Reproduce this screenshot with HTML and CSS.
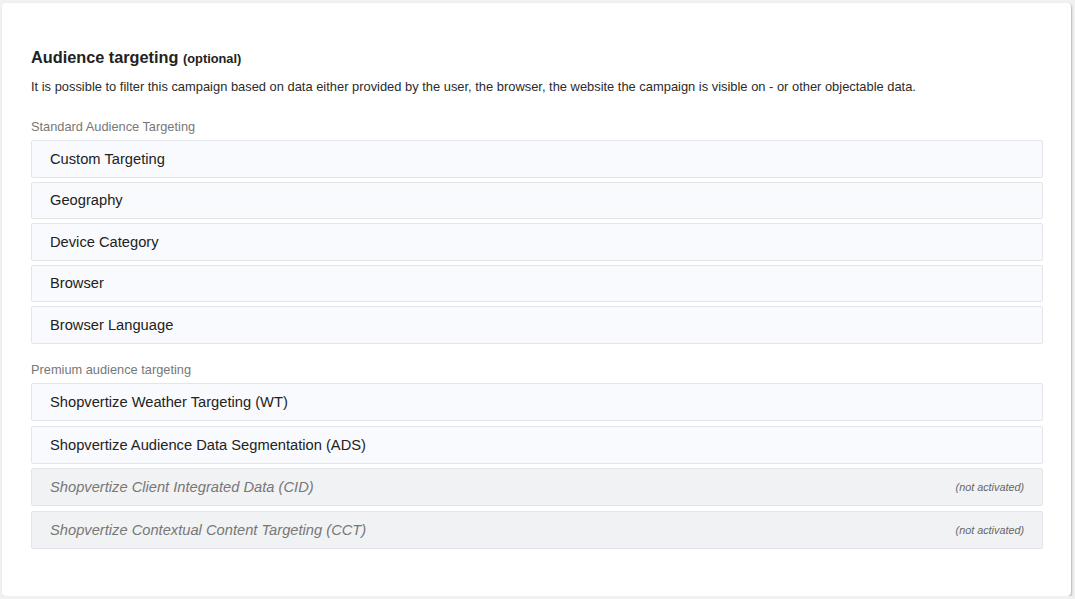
FILE: index.html
```html
<!DOCTYPE html>
<html lang="en">

<head>
    <meta charset="UTF-8">
    <meta name="viewport" content="width=device-width, initial-scale=1.0">
    <title>Audience targeting</title>
    <link rel="stylesheet" href="styles.css">
</head>

<body>

    <div class="card">
        <h2 class="title">Audience targeting <small>(optional)</small></h2>
        <p class="description">It is possible to filter this campaign based on data either provided by the user, the browser, the website the campaign is visible on - or other objectable data.</p>

        <div class="group">
            <div class="group-label">Standard Audience Targeting</div>
            <div class="row">Custom Targeting</div>
            <div class="row">Geography</div>
            <div class="row">Device Category</div>
            <div class="row">Browser</div>
            <div class="row">Browser Language</div>
        </div>

        <div class="group premium">
            <div class="group-label">Premium audience targeting</div>
            <div class="row">Shopvertize Weather Targeting (WT)</div>
            <div class="row">Shopvertize Audience Data Segmentation (ADS)</div>
            <div class="row disabled">
                <span>Shopvertize Client Integrated Data (CID)</span>
                <span class="state">(not activated)</span>
            </div>
            <div class="row disabled">
                <span>Shopvertize Contextual Content Targeting (CCT)</span>
                <span class="state">(not activated)</span>
            </div>
        </div>
    </div>

</body>

</html>
```

FILE: styles.css
```css
body {
    margin: 0;
    background-color: #f1f1f1;
    font-family: "Liberation Sans", Arial, sans-serif;
    color: #222;
}

.card {
    margin: 3px 4px 0 2px;
    height: 593px;
    box-sizing: border-box;
    padding: 44px 28px 0 29px;
    background-color: #fff;
    border-radius: 4px;
    box-shadow: 1px 1px 2px rgba(0, 0, 0, 0.25);
}

.title {
    margin: 0 0 9px 0;
    font-size: 16.3px;
    line-height: 20px;
    font-weight: bold;
    color: #222;
}

.title small {
    font-size: 12.8px;
}

.description {
    margin: 0;
    font-size: 12.9px;
    line-height: 18px;
    color: #2b2b2b;
}

.group {
    margin-top: 23px;
    display: flex;
    flex-direction: column;
    gap: 4px;
}

.group.premium {
    margin-top: 18px;
    gap: 4.5px;
}

.group-label {
    font-size: 12.8px;
    line-height: 16px;
    color: #777;
    margin-bottom: 1px;
}

.row {
    height: 37.5px;
    box-sizing: border-box;
    padding: 0 18px;
    display: flex;
    align-items: center;
    justify-content: space-between;
    background-color: #f9fafd;
    border: 1px solid #e2e5e9;
    border-radius: 2px;
    font-size: 14.7px;
    color: #222;
}

.premium .row {
    height: 38px;
}

.row.disabled {
    background-color: #f1f2f4;
    color: #777;
    font-style: italic;
}

.row .state {
    font-size: 10.8px;
    color: #666;
}
```
